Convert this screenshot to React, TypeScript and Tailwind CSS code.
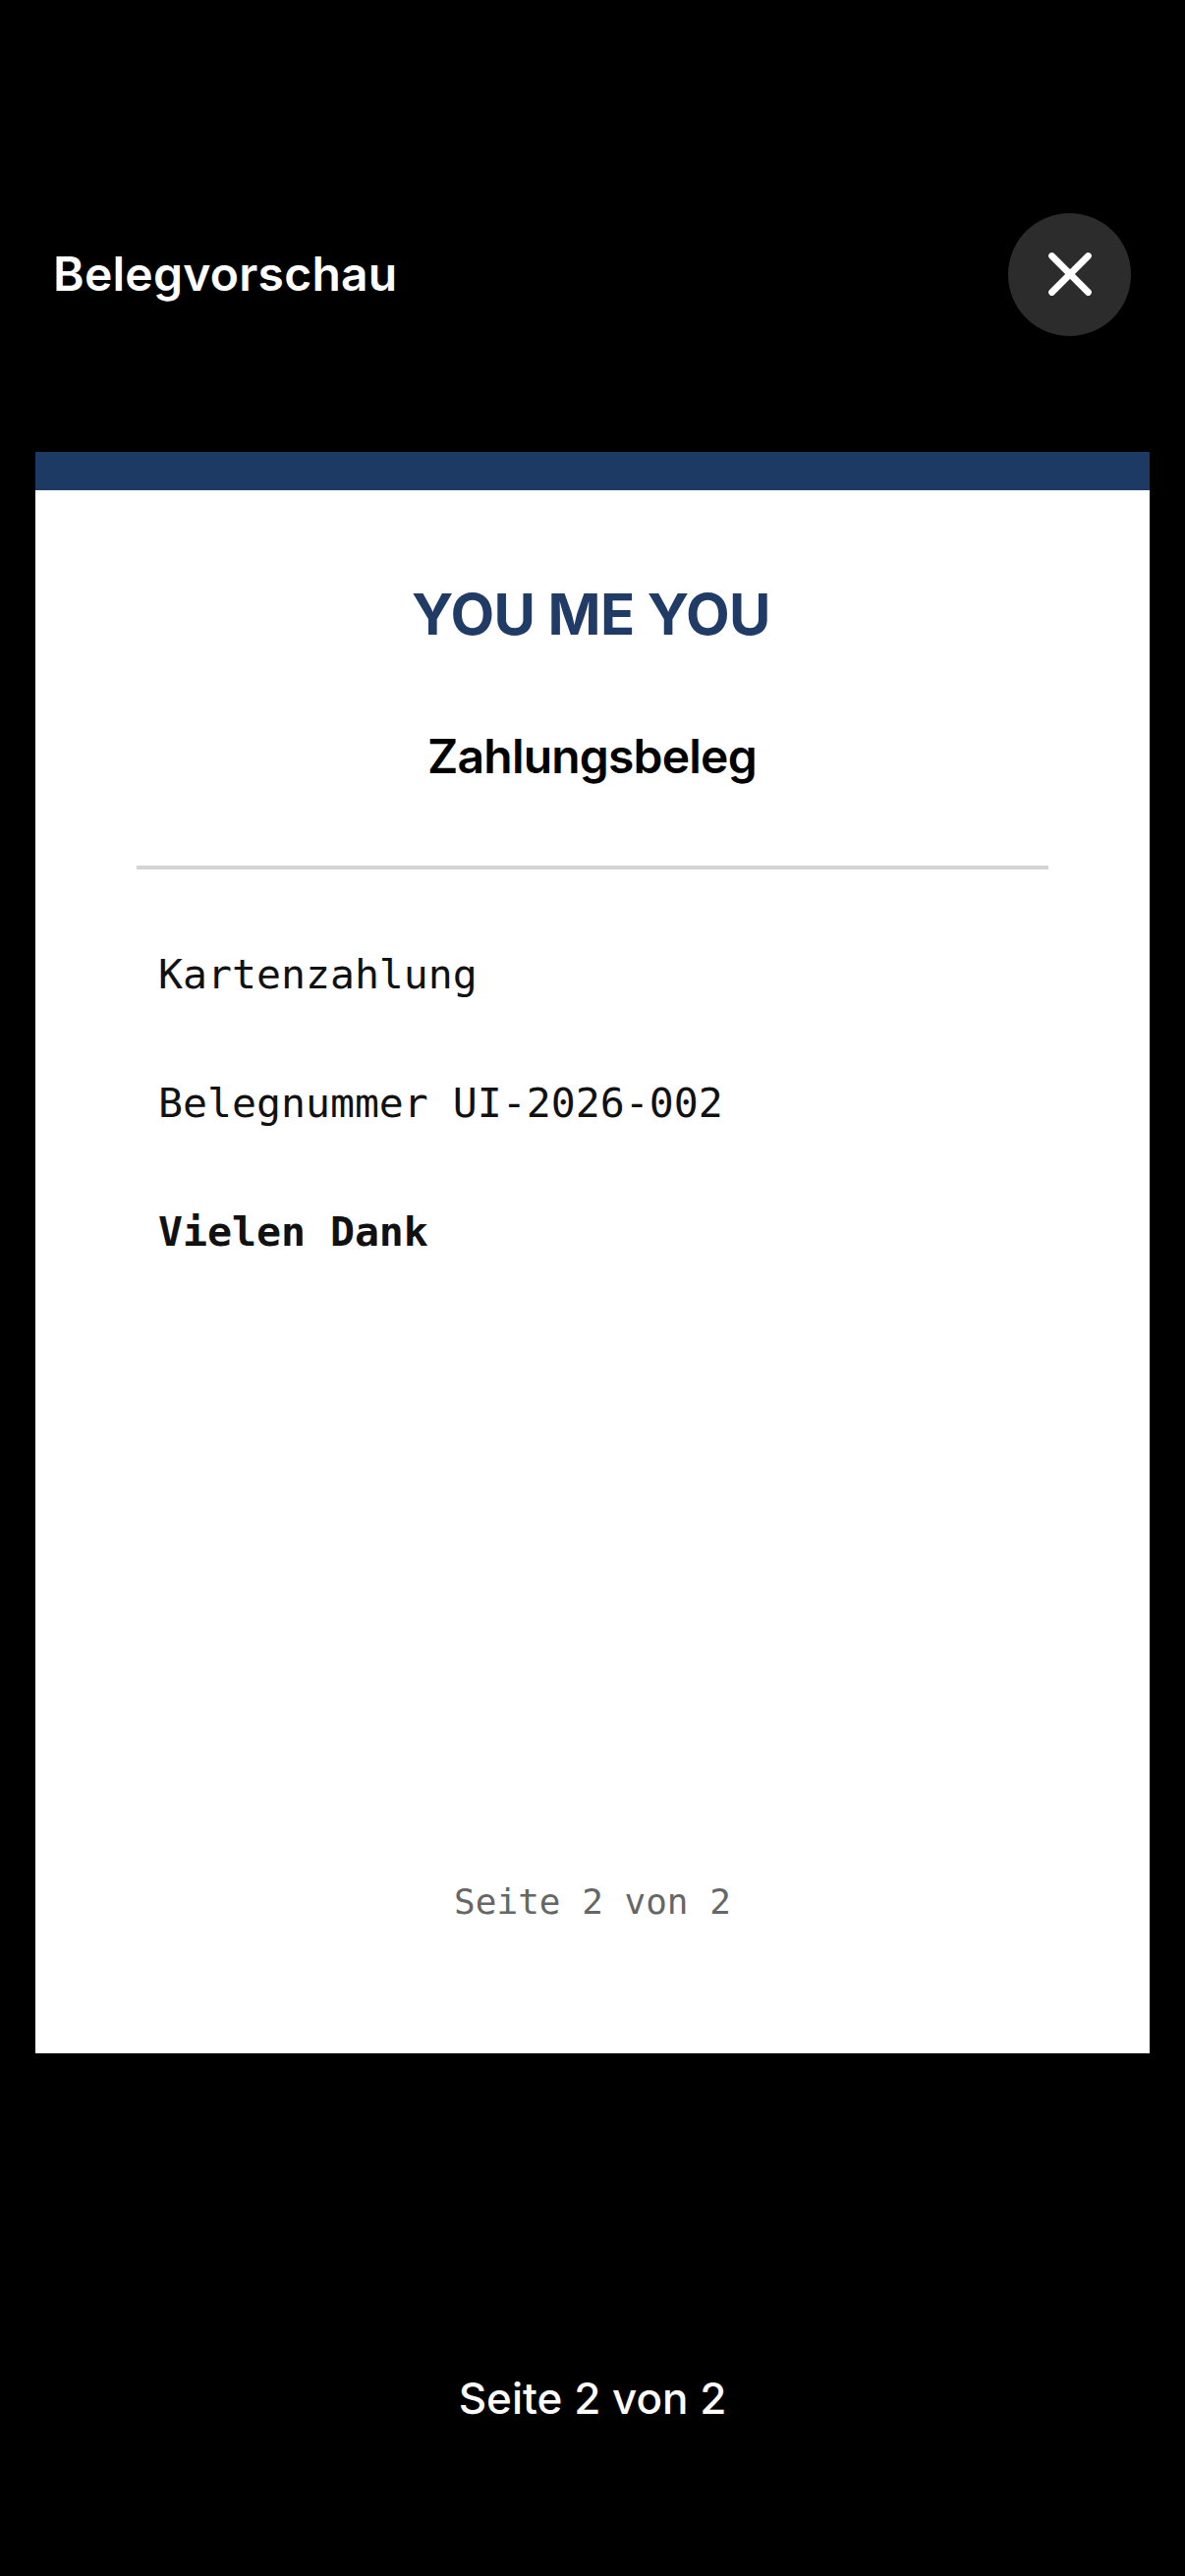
import React from 'react';
import { X } from 'lucide-react';

const App: React.FC = () => {
  return (
    <div className="w-[1206px] h-[2622px] bg-black flex flex-col font-['Inter',sans-serif] text-white">
      <div className="flex items-center justify-between h-[126px] mt-[216px] pl-[54px] pr-[55px]">
        <h1 className="text-[48px] leading-[56px] font-semibold tracking-[0.25px]">Belegvorschau</h1>
        <button className="w-[125px] h-[125px] rounded-full bg-[#2c2c2c] flex items-center justify-center">
          <X size={74} strokeWidth={2.2} color="#ffffff" />
        </button>
      </div>

      <div className="mt-[118px] mx-[36px] h-[1630px] bg-white flex flex-col text-black">
        <div className="h-[39px] bg-[#1c3a63]" />
        <div className="text-center text-[58px] leading-[68px] mt-[92px] pr-[3px] font-bold tracking-[-0.6px] text-[#1f3b66]">YOU ME YOU</div>
        <div className="text-center text-[48px] leading-[56px] mt-[83px] pr-[1px] font-semibold tracking-[-0.8px]">Zahlungsbeleg</div>
        <div className="mt-[83px] mx-[103px] h-[4px] bg-[#d4d4d4]" />
        <div className="font-['DejaVu_Sans_Mono',monospace] text-[41.5px] leading-[50px] ml-[125px] mt-[82px] flex flex-col gap-[81px] text-[#111111]">
          <div>Kartenzahlung</div>
          <div>Belegnummer UI-2026-002</div>
          <div className="font-bold">Vielen Dank</div>
        </div>
        <div className="font-['DejaVu_Sans_Mono',monospace] text-center text-[36px] leading-[44px] mt-[635px] text-[#666666]">Seite 2 von 2</div>
      </div>

      <div className="text-center text-[44px] leading-[54px] mt-[324px] font-medium">Seite 2 von 2</div>
    </div>
  );
};

export default App;
